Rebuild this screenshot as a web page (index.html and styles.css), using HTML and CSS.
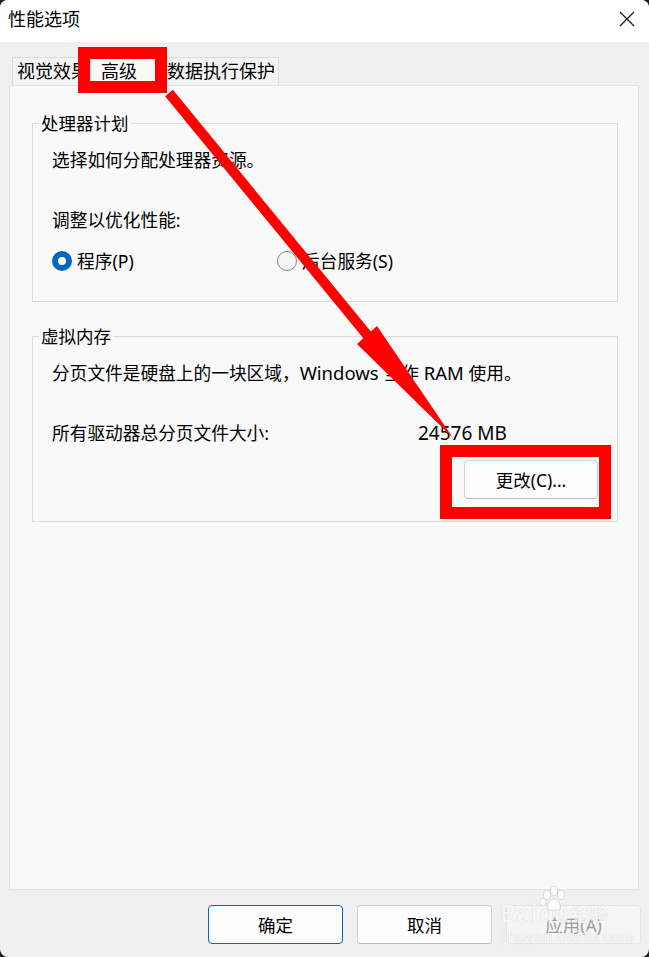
FILE: index.html
```html
<!DOCTYPE html>
<html>
<head>
    <link rel="stylesheet" href="styles.css">
</head>

<body>

    <div class="window">

        <div class="titlebar">
            <span class="title">性能选项</span>
            <svg class="close" width="16" height="16" viewBox="0 0 16 16">
                <path d="M1 1 L15 15 M15 1 L1 15" stroke="#1a1a1a" stroke-width="1.3" fill="none"/>
            </svg>
        </div>

        <div class="content">
            <div class="tabs">
                <div class="tab tab-first">视觉效果</div>
                <div class="tab tab-active">高级</div>
                <div class="tab tab-last">数据执行保护</div>
            </div>

            <div class="panel">

                <fieldset class="group group-cpu">
                    <legend>处理器计划</legend>
                    <p class="line line-first">选择如何分配处理器资源。</p>
                    <p class="line line-next">调整以优化性能:</p>
                    <div class="radios">
                        <label class="option option-first"><span class="radio checked"></span>程序(P)</label>
                        <label class="option"><span class="radio"></span>后台服务(S)</label>
                    </div>
                </fieldset>

                <fieldset class="group group-memory">
                    <legend>虚拟内存</legend>
                    <p class="line line-first">分页文件是硬盘上的一块区域，<span class="latin">Windows </span>当作<span class="latin"> RAM </span>使用。</p>
                    <div class="line line-next size-row">
                        <span class="size-label">所有驱动器总分页文件大小:</span>
                        <span class="size-value">24576 MB</span>
                    </div>
                    <div class="change-row">
                        <button class="btn btn-change">更改(C)...</button>
                    </div>
                </fieldset>

            </div>
        </div>

        <div class="footer">
            <button class="btn btn-ok">确定</button>
            <button class="btn">取消</button>
            <button class="btn btn-disabled">应用(A)</button>
        </div>

        <!-- watermark -->
        <div class="watermark">
            <svg class="wm-paw" width="36" height="26" viewBox="0 0 36 26">
                <ellipse cx="11" cy="9" rx="3.5" ry="4.5" />
                <ellipse cx="18" cy="5" rx="3.5" ry="4.5" />
                <ellipse cx="25" cy="9" rx="3.5" ry="4.5" />
                <ellipse cx="7" cy="16" rx="3" ry="4" />
                <path d="M12 24 C10 18 15 13 18 13 C21 13 26 18 24 24 Z" />
            </svg>
            <div class="wm-top">
                <span class="wm-bai">Bai</span>
                <span class="wm-du">du</span>
                <span class="wm-jy">经验</span>
            </div>
            <div class="wm-url">jingyan.baidu.com</div>
        </div>

        <!-- red annotations -->
        <svg class="marks" width="649" height="957" viewBox="0 0 649 957">
            <rect x="84" y="53" width="77" height="34" fill="none" stroke="#ff0000" stroke-width="12"/>
            <rect x="446" y="451" width="159" height="62" fill="none" stroke="#ff0000" stroke-width="12"/>
            <line x1="169" y1="93" x2="368" y2="336" stroke="#ff0000" stroke-width="10"/>
            <polygon points="357,344 377,326 453,438" fill="#ff0000"/>
        </svg>

    </div>

</body>

</html>
```

FILE: styles.css
```css
html,
body {
    margin: 0;
    background-color: #1f1f1f;
}

.window {
    position: relative;
    width: 649px;
    height: 957px;
    background-color: #f0f0f0;
    border-radius: 8px;
    overflow: hidden;
    display: flex;
    flex-direction: column;
    font-family: "Noto Sans", "Noto Sans CJK SC", sans-serif;
    color: #000;
}

.titlebar {
    height: 42px;
    box-sizing: border-box;
    background-color: #fff;
    display: flex;
    align-items: center;
    justify-content: space-between;
    padding: 0 14px 4px 8px;
}

.title {
    font-size: 18px;
    line-height: 24px;
}

.content {
    flex: 1;
    display: flex;
    flex-direction: column;
    padding: 15px 10px 0 9px;
}

.tabs {
    display: flex;
    height: 28px;
    padding-left: 3px;
    position: relative;
    z-index: 1;
}

.tab {
    box-sizing: border-box;
    height: 28px;
    font-size: 18px;
    line-height: 26px;
    border: 1px solid #dcdcdc;
    border-bottom: none;
    background-color: #f3f3f3;
    white-space: nowrap;
    overflow: hidden;
}

.tab-first {
    width: 79px;
    padding-left: 4px;
}

.tab-active {
    width: 68px;
    height: 29px;
    margin-left: -1px;
    padding-left: 10px;
    background-color: #f9f9f9;
}

.tab-last {
    width: 122px;
    margin-left: -1px;
    padding-left: 9px;
}

.panel {
    flex: 1;
    background-color: #f9f9f9;
    border: 1px solid #e3e3e3;
    padding: 25px 20px 0 22px;
}

.group {
    margin: 0;
    border: 1px solid #dadada;
    padding: 0 19px 28px 19px;
    min-width: 0;
}

.group legend {
    font-size: 17.5px;
    line-height: 24px;
    padding: 0 2px;
    margin-left: -13px;
}

.group-memory {
    margin-top: 22px;
    padding-bottom: 22px;
}

.line {
    margin: 0;
    font-size: 17.7px;
    line-height: 24px;
    white-space: nowrap;
}

.latin {
    font-size: 18.5px;
}

.line-first {
    margin-top: 13px;
}

.line-next {
    margin-top: 36px;
}

.radios {
    display: flex;
    margin-top: 17px;
    font-size: 17.7px;
    line-height: 24px;
}

.option {
    display: flex;
    align-items: center;
    gap: 5px;
}

.option-first {
    width: 225px;
}

.radio {
    box-sizing: border-box;
    width: 20px;
    height: 20px;
    border-radius: 50%;
    border: 1px solid #858585;
    background-color: #f5f5f5;
}

.radio.checked {
    border: 6px solid #0067c0;
    background-color: #fff;
}

.size-row {
    display: flex;
}

.size-label {
    width: 366px;
}

.size-value {
    font-size: 19px;
}

.change-row {
    display: flex;
    justify-content: flex-end;
    margin-top: 15px;
}

.btn {
    box-sizing: border-box;
    width: 135px;
    height: 39px;
    padding: 0;
    border: 1px solid #d1d1d1;
    border-bottom-color: #bcbcbc;
    border-radius: 4px;
    background-color: #fdfdfd;
    font-family: "Noto Sans", "Noto Sans CJK SC", sans-serif;
    font-size: 17.5px;
    color: #000;
}

.btn-change {
    width: 134px;
}

.footer {
    height: 67px;
    box-sizing: border-box;
    display: flex;
    justify-content: flex-end;
    gap: 14px;
    padding: 15px 8px 0 0;
}

.btn-ok {
    border: 1px solid #0067c0;
}

.btn-disabled {
    background-color: #f5f5f5;
    border-color: #e5e5e5;
    color: #9d9d9d;
}

.watermark {
    position: absolute;
    left: 500px;
    top: 884px;
    z-index: 4;
    color: rgba(255, 255, 255, 0.85);
    text-shadow: 0 0 1px rgba(0, 0, 0, 0.2);
    font-family: "Liberation Sans", Arial, sans-serif;
    pointer-events: none;
}

.wm-paw {
    position: absolute;
    left: 36px;
    top: 2px;
    fill: rgba(255, 255, 255, 0.85);
    stroke: rgba(0, 0, 0, 0.12);
    stroke-width: 1;
}

.wm-top {
    display: flex;
    align-items: flex-end;
    height: 42px;
}

.wm-bai,
.wm-du {
    font-size: 24px;
    font-weight: bold;
    line-height: 24px;
}

.wm-du {
    margin-left: 2px;
}

.wm-jy {
    font-family: "Noto Sans CJK SC", sans-serif;
    font-size: 19px;
    font-weight: bold;
    line-height: 24px;
    margin-left: 2px;
}

.wm-url {
    margin-top: 2px;
    font-size: 16px;
    line-height: 18px;
    letter-spacing: 0.3px;
}

.marks {
    position: absolute;
    left: 0;
    top: 0;
    z-index: 5;
    pointer-events: none;
}
```
